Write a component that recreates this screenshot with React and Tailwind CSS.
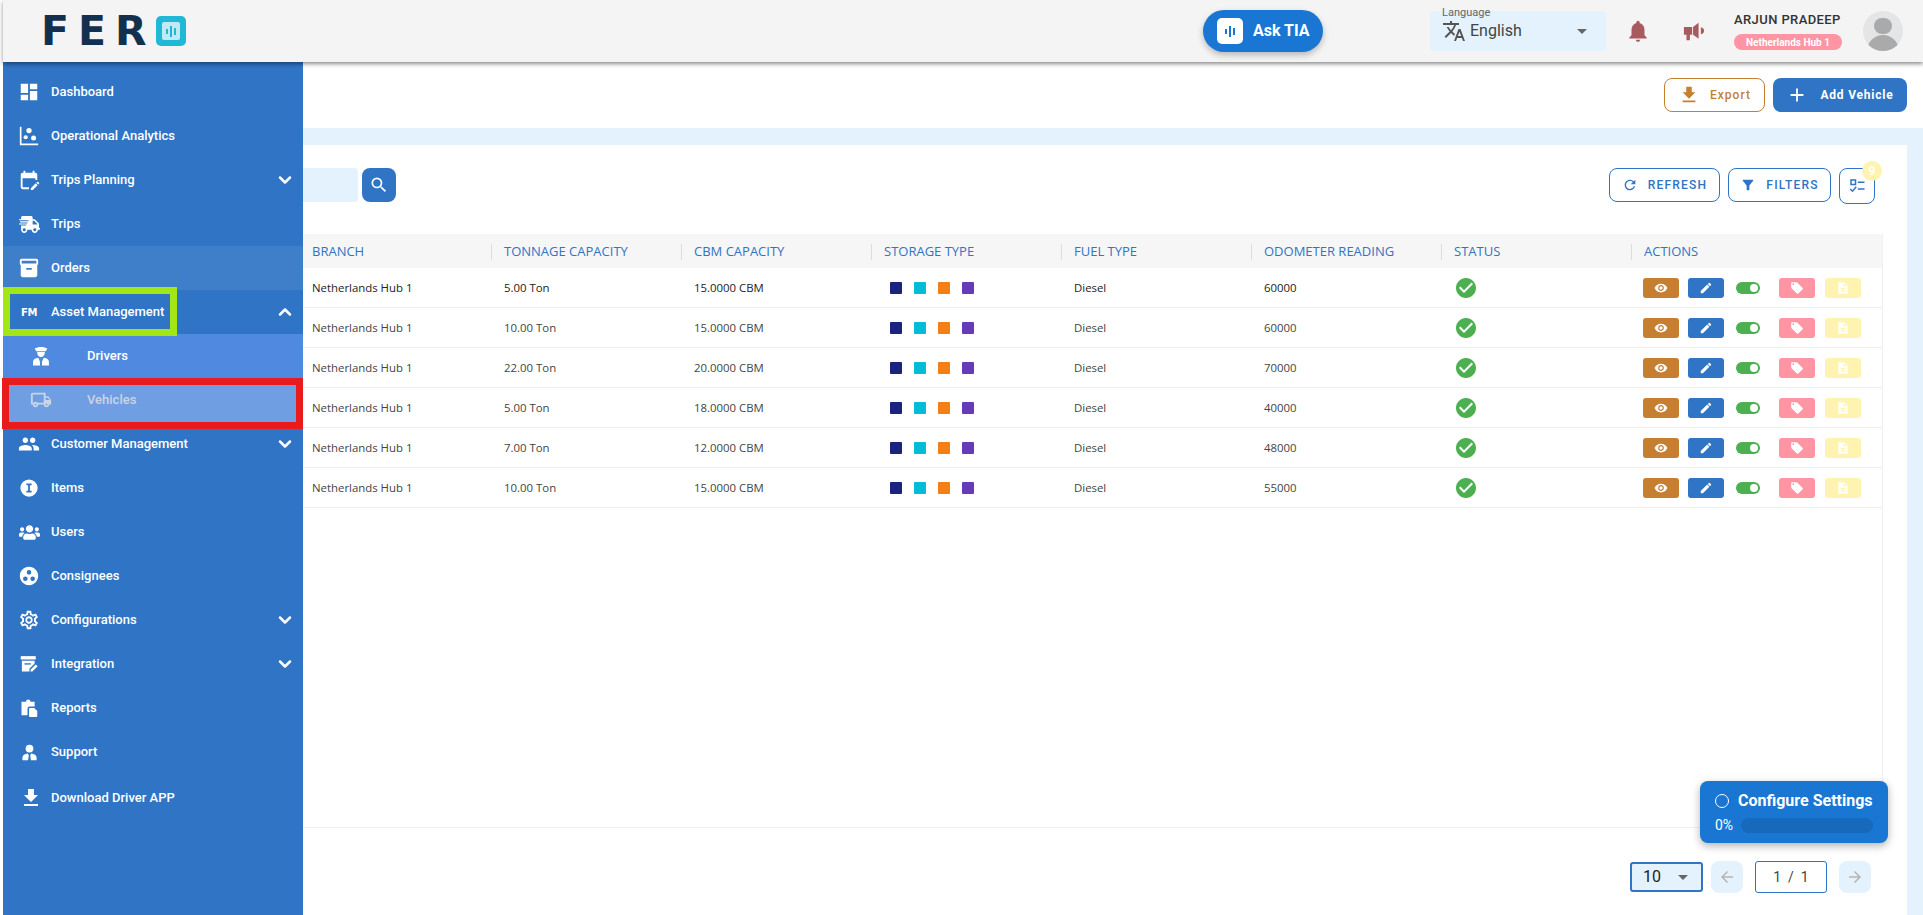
import React from 'react';
import {
  MdDashboard, MdEditCalendar, MdInventory2, MdOutlineLocalShipping, MdPeople,
  MdGroupWork, MdOutlineSettings, MdFileDownload, MdTranslate, MdArrowDropDown, MdNotifications,
  MdAdd, MdRefresh, MdFilterAlt, MdVisibility, MdEdit, MdLocalOffer, MdDescription, MdArrowBack,
  MdArrowForward, MdCheckCircle, MdSearch,
} from 'react-icons/md';
import { FaShippingFast, FaUsers } from 'react-icons/fa';
import { ChevronDown, ChevronUp } from 'lucide-react';

const AnalyticsIcon = (props) => (
  <svg viewBox="0 0 24 24" fill="currentColor" {...props}>
    <path d="M1 1h2v20h20v2H1z" />
    <circle cx="12" cy="5.500" r="3.200" />
    <circle cx="8" cy="13.500" r="2.500" />
    <circle cx="17.500" cy="14.500" r="3" />
  </svg>
);

const ItemsIcon = (props) => (
  <svg viewBox="0 0 24 24" {...props}>
    <circle cx="12" cy="12" r="11.500" fill="currentColor" />
    <path d="M8.500 6h7v2.200H13.200v7.600h2.300V18h-7v-2.200h2.300V8.200H8.500z" fill="#2f74c5" />
  </svg>
);

const DriverIcon = (props) => (
  <svg viewBox="0 0 24 24" fill="currentColor" {...props}>
    <path d="M4.500 3C8 .5 16 .5 19.500 3l-1.800 3.200H6.300z" />
    <path d="M7.500 7.200h9v1.300c0 2.800-2 4.800-4.500 4.800s-4.500-2-4.500-4.800z" />
    <path d="M2.500 23.500v-5c0-2.400 2.500-4 6.200-4.500l2.100 4.800v4.700zM21.500 23.500v-5c0-2.400-2.500-4-6.200-4.500l-2.100 4.800v4.700z" />
  </svg>
);

const IntegrationIcon = (props) => (
  <svg viewBox="0 0 24 24" fill="currentColor" {...props}>
    <path d="M1 1.500h20V6H1z" />
    <path d="M2.500 7.500h17v3.700l-7 7V22h-10z" />
    <path d="M14 19.500l7-7 2.500 2.500-7 7H14z" />
    <path d="M6 11h8.500v1.800H6z" fill="#2f74c5" />
  </svg>
);

const ReportsIcon = (props) => (
  <svg viewBox="0 0 24 24" fill="currentColor" {...props}>
    <path d="M2 3.500h6a3 3 0 0 1 6 0h5.500V10H13a3 3 0 0 0-3 3v8.500H2z" />
    <path d="M13.500 12H19l4 4v6.500a1.500 1.500 0 0 1-1.500 1.500h-8a1.500 1.500 0 0 1-1.500-1.500v-9a1.500 1.500 0 0 1 1.500-1.500z" />
  </svg>
);

const SupportIcon = (props) => (
  <svg viewBox="0 0 24 24" fill="currentColor" {...props}>
    <circle cx="12" cy="6.500" r="5.500" />
    <path d="M2 23v-4c0-3 3.500-5 7.500-5.500L11 16l-1 7zM22 23v-4c0-3-3.500-5-7.500-5.500L13 16l1 7z" />
  </svg>
);

const MegaphoneIcon = (props) => (
  <svg viewBox="0 0 24 24" fill="currentColor" {...props}>
    <path d="M1 7.500h9v8.500H7.500v6H3.800v-6H1z" />
    <path d="M11 7.500l6-4.500v17.500l-6-4.500z" />
    <path d="M19.500 8c2.200.6 3.500 2 3.500 3.800s-1.300 3.200-3.500 3.800z" />
  </svg>
);

const ColumnsIcon = (props) => (
  <svg viewBox="0 0 24 24" fill="none" stroke="currentColor" strokeWidth="2" {...props}>
    <rect x="4" y="4" width="6" height="6" />
    <path d="M13 7h9M13 16h9M3 16l3 3 5-6" />
  </svg>
);

const Logo = () => (
  <div className="flex items-center">
    <span className="font-['DejaVu_Sans',sans-serif] font-bold text-[41px] leading-none tracking-[9px] text-[#14304f]">FER</span>
    <div className="w-[30px] h-[30px] rounded-[5px] bg-[#1fb9d6] flex items-center justify-center">
      <div className="w-[18px] h-[18px] rounded-[2px] bg-[#bfeaf3] flex items-center justify-center gap-[2px]">
        <span className="w-[2px] h-[5px] bg-[#1fb9d6]" />
        <span className="w-[2px] h-[11px] bg-[#1fb9d6]" />
        <span className="w-[2px] h-[7px] bg-[#1fb9d6]" />
      </div>
    </div>
  </div>
);

const Header = () => (
  <header className="relative z-10 h-[62px] ml-[3px] pl-[38px] pr-5 flex items-center bg-[#f4f4f4] shadow-[0_2px_4px_rgba(0,0,0,0.45)] shrink-0">
    <Logo />
    <button className="ml-auto mr-[107px] w-[120px] h-[42px] pl-[14px] rounded-full bg-[#1976d2] text-white flex items-center gap-[10px] shadow-[0_3px_6px_rgba(0,0,0,0.25)]">
      <span className="w-[26px] h-[26px] rounded-[5px] bg-white flex items-center justify-center gap-[2px]">
        <span className="w-[2px] h-[5px] bg-[#1976d2]" />
        <span className="w-[2px] h-[11px] bg-[#1976d2]" />
        <span className="w-[2px] h-[7px] bg-[#1976d2]" />
      </span>
      <span className="text-[16px] font-bold">Ask TIA</span>
    </button>
    <div className="relative w-[176px] h-10 pl-3 pr-[12px] rounded bg-[#e3f2fd] flex items-center text-[#555]">
      <span className="absolute left-3 -top-[5px] text-[11px] leading-[14px] text-[#666]">Language</span>
      <MdTranslate className="w-6 h-6" />
      <span className="ml-[4px] text-[16px] text-[#444]">English</span>
      <MdArrowDropDown className="ml-auto w-6 h-6 text-[#666]" />
    </div>
    <MdNotifications className="ml-[19px] w-[26px] h-[26px] text-[#a85a5e]" />
    <MegaphoneIcon className="ml-[32px] w-[22px] h-[22px] text-[#a85a5e]" />
    <div className="ml-[29px] w-[113px]">
      <div className="text-[13px] leading-4 font-medium tracking-[0.4px] text-[#333] whitespace-nowrap">ARJUN PRADEEP</div>
      <div className="mt-[6px] w-[108px] h-4 rounded-full bg-[#ff95a3] text-white text-[10px] font-bold flex items-center justify-center whitespace-nowrap">Netherlands Hub 1</div>
    </div>
    <div className="ml-4 w-10 h-10 rounded-full bg-[#e4e5e6] overflow-hidden flex flex-col items-center">
      <span className="mt-[7px] w-[18px] h-[20px] rounded-full bg-[#aaa]" />
      <span className="mt-[1px] w-[32px] h-[20px] rounded-t-full bg-[#aaa]" />
    </div>
  </header>
);

const NavItem = ({ icon: Icon, label, chevron, className = '', iconClass = 'w-[22px] h-[22px]' }) => (
  <div className={`h-11 pl-[15px] pr-2 flex items-center text-white ${className}`}>
    <span className="w-[22px] flex items-center justify-center">
      <Icon className={`shrink-0 ${iconClass}`} />
    </span>
    <span className="ml-[11px] text-[13px] font-medium whitespace-nowrap">{label}</span>
    {chevron === 'down' && <ChevronDown strokeWidth={3} className="ml-auto w-5 h-5" />}
    {chevron === 'up' && <ChevronUp strokeWidth={3} className="ml-auto w-5 h-5" />}
  </div>
);

const SubItem = ({ icon: Icon, label, className = '', iconClass = 'w-5 h-5' }) => (
  <div className={`h-11 pl-[27px] flex items-center ${className}`}>
    <span className="w-[22px] flex items-center justify-center">
      <Icon className={iconClass} />
    </span>
    <span className="ml-[35px] text-[13px] font-medium">{label}</span>
  </div>
);

const Sidebar = () => (
  <aside className="relative w-[300px] shrink-0 pt-2 bg-[#2f74c5]">
    <NavItem icon={MdDashboard} label="Dashboard" />
    <NavItem icon={AnalyticsIcon} label="Operational Analytics" iconClass="w-5 h-5" />
    <NavItem icon={MdEditCalendar} label="Trips Planning" chevron="down" />
    <NavItem icon={FaShippingFast} label="Trips" iconClass="w-[21px] h-[21px]" />
    <NavItem icon={MdInventory2} label="Orders" className="bg-[#3f7fca]" />
    <div className="h-11 pl-[15px] pr-2 flex items-center text-white">
      <span className="w-[22px] text-center font-['DejaVu_Sans',sans-serif] text-[10px] font-bold tracking-[-0.5px]">FM</span>
      <span className="ml-[11px] text-[13px] font-medium">Asset Management</span>
      <ChevronUp strokeWidth={3} className="ml-auto w-5 h-5" />
    </div>
    <SubItem icon={DriverIcon} label="Drivers" className="bg-[#508ae0] text-white" iconClass="w-5 h-5" />
    <SubItem icon={MdOutlineLocalShipping} label="Vehicles" className="bg-[#6f9fe2] text-[#c9d4e6]" iconClass="w-[22px] h-[22px]" />
    <NavItem icon={MdPeople} label="Customer Management" chevron="down" />
    <NavItem icon={ItemsIcon} label="Items" iconClass="w-[18px] h-[18px]" />
    <NavItem icon={FaUsers} label="Users" iconClass="w-[21px] h-[21px]" />
    <NavItem icon={MdGroupWork} label="Consignees" />
    <NavItem icon={MdOutlineSettings} label="Configurations" chevron="down" />
    <NavItem icon={IntegrationIcon} label="Integration" chevron="down" iconClass="w-[18px] h-[18px]" />
    <NavItem icon={ReportsIcon} label="Reports" iconClass="w-[18px] h-[18px]" />
    <NavItem icon={SupportIcon} label="Support" iconClass="w-[17px] h-[17px]" />
    <NavItem icon={MdFileDownload} label="Download Driver APP" className="mt-[2px]" iconClass="w-6 h-6 translate-x-[2px]" />

    {/* annotation boxes drawn on the screenshot */}
    <div className="absolute left-0 top-[225px] w-[174px] h-[49px] border-[7px] border-[#a3e616]" />
    <div className="absolute -left-px top-[316px] w-[301px] h-[51px] border-[7px] border-[#e81c1c]" />
  </aside>
);

const columns = ['BRANCH', 'TONNAGE CAPACITY', 'CBM CAPACITY', 'STORAGE TYPE', 'FUEL TYPE', 'ODOMETER READING', 'STATUS', 'ACTIONS'];

const rows = [
  { ton: '5.00', cbm: '15.0000', odo: '60000' },
  { ton: '10.00', cbm: '15.0000', odo: '60000' },
  { ton: '22.00', cbm: '20.0000', odo: '70000' },
  { ton: '5.00', cbm: '18.0000', odo: '40000' },
  { ton: '7.00', cbm: '12.0000', odo: '48000' },
  { ton: '10.00', cbm: '15.0000', odo: '55000' },
];

const gridCols = 'grid grid-cols-[188px_190px_190px_190px_190px_190px_190px_250px]';

const ActionBtn = ({ icon: Icon, className }) => (
  <span className={`w-9 h-5 rounded-[3px] flex items-center justify-center text-white ${className}`}>
    <Icon className="w-[14px] h-[14px]" />
  </span>
);

const Table = () => (
  <div className="mt-[30px] mr-[24px] flex-1 border-r border-b border-[#f0f0f0] font-['Open_Sans',sans-serif]">
    <div className={`${gridCols} h-[34px] pt-px items-center bg-[#f6f6f6] text-[13px] font-medium text-[#2f74c5]`}>
      {columns.map((c, i) => (
        <div key={c} className={i === 0 ? 'pl-[9px]' : 'pl-3 border-l border-[#ddd] h-4 flex items-center whitespace-nowrap'}>{c}</div>
      ))}
    </div>
    {rows.map((r, i) => (
      <div key={i} className={`${gridCols} h-10 items-center border-b border-[#eee] text-[11.4px] ${i === 0 ? 'text-[#222]' : 'text-[#444]'}`}>
        <div className="pl-[9px]">Netherlands Hub 1</div>
        <div className="pl-[13px]">{r.ton} Ton</div>
        <div className="pl-[13px]">{r.cbm} CBM</div>
        <div className="mt-px pl-[19px] flex gap-3">
          <span className="w-3 h-3 rounded-[1px] bg-[#1a237e]" />
          <span className="w-3 h-3 rounded-[1px] bg-[#00bcd4]" />
          <span className="w-3 h-3 rounded-[1px] bg-[#f57f17]" />
          <span className="w-3 h-3 rounded-[1px] bg-[#673ab7]" />
        </div>
        <div className="pl-[13px]">Diesel</div>
        <div className="pl-[13px]">{r.odo}</div>
        <div className="mt-px pl-[13px]"><MdCheckCircle className="w-6 h-6 text-[#4caf50]" /></div>
        <div className="mt-px pl-3 flex items-center">
          <ActionBtn icon={MdVisibility} className="bg-[#c67f30]" />
          <ActionBtn icon={MdEdit} className="ml-[9px] bg-[#2f74c5]" />
          <span className="ml-3 w-6 h-3 rounded-full bg-[#4caf50] flex items-center justify-end pr-[2px]">
            <span className="w-2 h-2 rounded-full bg-white" />
          </span>
          <ActionBtn icon={MdLocalOffer} className="ml-[19px] bg-[#ff95a3]" />
          <ActionBtn icon={MdDescription} className="ml-[10px] bg-[#fff3b0]" />
        </div>
      </div>
    ))}
  </div>
);

const Toolbar = () => (
  <div className="pt-[23px] pr-8 flex items-start">
    <div className="w-[55px] h-[34px] rounded-r bg-[#e3f2fd]" />
    <button className="ml-1 w-[34px] h-[34px] rounded-lg bg-[#2f74c5] flex items-center justify-center text-white">
      <MdSearch className="w-5 h-5" />
    </button>
    <button className="ml-auto w-[111px] h-[34px] rounded-lg border border-[#2f74c5] text-[#2f74c5] flex items-center justify-center gap-[10px] text-[12px] font-medium tracking-[1.2px]">
      <MdRefresh className="w-4 h-4" /> REFRESH
    </button>
    <button className="ml-2 w-[103px] h-[34px] rounded-lg border border-[#2f74c5] text-[#2f74c5] flex items-center justify-center gap-[10px] text-[12px] font-medium tracking-[1.2px]">
      <MdFilterAlt className="w-4 h-4" /> FILTERS
    </button>
    <button className="relative ml-2 w-9 h-9 rounded-lg border border-[#2f74c5] text-[#2f74c5] flex items-center justify-center">
      <ColumnsIcon className="w-[18px] h-[18px]" />
      <span className="absolute -right-2 -top-[8px] w-5 h-5 rounded-full bg-[#fff3b0] text-white text-[12px] font-bold flex items-center justify-center">9</span>
    </button>
  </div>
);

const Pager = () => (
  <div className="h-[87px] pt-[33px] pr-9 flex items-start justify-end font-['Roboto',sans-serif]">
    <div className="mt-px w-[73px] h-[30px] pl-[11px] pr-[6px] rounded-[3px] border-2 border-[#2f74c5] bg-[#e3f2fd] flex items-center text-[16px] text-[#222]">
      10
      <MdArrowDropDown className="ml-auto w-6 h-6 text-[#666]" />
    </div>
    <button className="ml-2 w-8 h-8 rounded-lg bg-[#e3f2fd] flex items-center justify-center text-[#b5b5b5]">
      <MdArrowBack className="w-[18px] h-[18px]" />
    </button>
    <div className="ml-3 w-[72px] h-8 rounded-[3px] border border-[#2f74c5] flex items-center justify-center text-[14px] text-[#444] whitespace-pre">1  /  1</div>
    <button className="ml-3 w-8 h-8 rounded-lg bg-[#e3f2fd] flex items-center justify-center text-[#b5b5b5]">
      <MdArrowForward className="w-[18px] h-[18px]" />
    </button>
  </div>
);

export default function App() {
  return (
    <div className="relative h-screen flex flex-col overflow-hidden bg-white font-['Roboto',sans-serif]">
      <Header />
      <div className="flex flex-1 min-h-0 pl-[3px]">
        <Sidebar />
        <main className="flex-1 min-w-0 flex flex-col bg-[#e3f2fd]">
          <div className="h-[66px] pt-4 pr-4 bg-white flex items-start justify-end shrink-0">
            <button className="w-[101px] h-[34px] rounded-lg border border-[#c67f30] text-[#c67f30] flex items-center justify-center gap-[10px] text-[12px] font-medium tracking-[1px]">
              <MdFileDownload className="w-[22px] h-[22px]" /> Export
            </button>
            <button className="ml-2 w-[134px] h-[34px] rounded-lg bg-[#2f74c5] text-white flex items-center justify-center gap-3 text-[12px] font-bold tracking-[0.8px]">
              <MdAdd className="w-[22px] h-[22px]" /> Add Vehicle
            </button>
          </div>
          <div className="mt-[17px] mr-4 flex-1 min-h-0 bg-white flex flex-col">
            <Toolbar />
            <Table />
            <Pager />
          </div>
        </main>
      </div>

      {/* floating setup widget */}
      <div className="absolute right-[35px] bottom-[72px] w-[188px] h-[62px] px-[15px] pt-[10px] rounded-lg bg-[#1976d2] text-white shadow-[0_3px_8px_rgba(0,0,0,0.3)]">
        <div className="flex items-center h-5">
          <span className="w-[14px] h-[14px] rounded-full border-[1.5px] border-white" />
          <span className="ml-[9px] text-[16px] font-bold whitespace-nowrap">Configure Settings</span>
        </div>
        <div className="mt-[4px] flex items-center">
          <span className="text-[14px]">0%</span>
          <span className="ml-2 flex-1 h-[15px] rounded-full bg-[#1669bb]" />
        </div>
      </div>
    </div>
  );
}
